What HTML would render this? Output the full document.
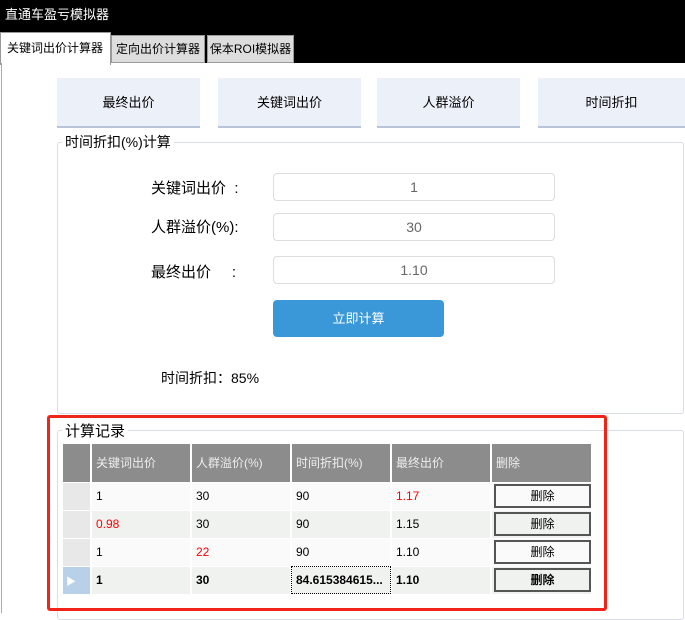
<!DOCTYPE html>
<html><head><meta charset="utf-8"><style>
*{margin:0;padding:0;box-sizing:border-box}
body{width:685px;height:613px;position:relative;overflow:hidden;background:#fff;font-family:"Liberation Sans","Noto Sans CJK SC",sans-serif;font-size:13px;color:#000}
.a{position:absolute}
.tb{background:#000;left:0;top:0;width:685px;height:63px}
.title{left:5px;top:4px;color:#fff;font-size:13px}
.tab{border:1px solid #999;background:#ddd;font-size:12px;text-align:center;line-height:26px}
.nb{background:#ecf0f8;border-bottom:2px solid #b8c4d8;height:50px;top:78px;text-align:center;line-height:50px;font-size:13px}
.fs{border:1px solid #d8dde6;border-radius:3px}
.lg{background:#fff;padding:0 3px;font-size:14px}
.lbl{font-size:15px}
.in{border:1px solid #ddd;border-radius:4px;left:273px;width:282px;height:28px;text-align:center;line-height:26px;color:#666;font-size:14px}
td{height:28px;padding-left:4px;font-size:12px;border-right:2px solid #fff;border-bottom:1px solid #fff}
th{height:38px;background:#8c8c8c;color:#eee;font-weight:normal;text-align:left;padding-left:4px;font-size:12px;border-right:2px solid #fff;border-bottom:1px solid #fff}
.rh{background:#e8e8e8;width:28px;padding:0}
.r{color:#f00}
.btn{border:2px solid #555;height:24px;width:97px;text-align:center;line-height:20px;margin-left:-2px}
</style></head><body>
<div class="a tb"></div>
<div class="a title">直通车盈亏模拟器</div>
<div class="a" style="left:0;top:32px;width:111px;height:33px;background:#fff;border:1px solid #999;border-bottom:none;font-size:12px;line-height:30px;padding-left:6px">关键词出价计算器</div>
<div class="a tab" style="left:111px;top:35px;width:94px;height:28px">定向出价计算器</div>
<div class="a tab" style="left:207px;top:35px;width:87px;height:28px">保本ROI模拟器</div>
<div class="a" style="left:1px;top:63px;width:1px;height:550px;background:#aaa"></div>
<div class="a nb" style="left:57px;width:143px">最终出价</div>
<div class="a nb" style="left:218px;width:143px">关键词出价</div>
<div class="a nb" style="left:377px;width:143px">人群溢价</div>
<div class="a nb" style="left:538px;width:147px">时间折扣</div>

<div class="a fs" style="left:57px;top:142px;width:627px;height:272px"></div>
<div class="a lg" style="left:62px;top:132px">时间折扣(%)计算</div>
<div class="a lbl" style="left:151px;top:177px">关键词出价&nbsp;&nbsp;:</div>
<div class="a lbl" style="left:151px;top:216px">人群溢价(%):</div>
<div class="a lbl" style="left:151px;top:261px">最终出价&nbsp;&nbsp;&nbsp;&nbsp;&nbsp;:</div>
<div class="a in" style="top:173px">1</div>
<div class="a in" style="top:213px">30</div>
<div class="a in" style="top:256px">1.10</div>
<div class="a" style="left:273px;top:300px;width:171px;height:37px;background:#3a98d8;border-radius:4px;color:#fff;text-align:center;line-height:37px;font-size:13px">立即计算</div>
<div class="a" style="left:161px;top:368px;font-size:14px">时间折扣：85%</div>

<div class="a fs" style="left:57px;top:430px;width:627px;height:190px"></div>
<div class="a lg" style="left:62px;top:420px;font-size:15px">计算记录</div>
<table class="a" style="left:63px;top:444px;border-collapse:collapse;width:530px">
<tr><th style="width:28px;padding:0"></th><th style="width:100px">关键词出价</th><th style="width:100px">人群溢价(%)</th><th style="width:100px">时间折扣(%)</th><th style="width:100px">最终出价</th><th>删除</th></tr>
<tr style="background:#fafafa"><td class="rh"></td><td>1</td><td>30</td><td>90</td><td class="r">1.17</td><td><div class="btn">删除</div></td></tr>
<tr style="background:#f0f2f0"><td class="rh"></td><td class="r">0.98</td><td>30</td><td>90</td><td>1.15</td><td><div class="btn">删除</div></td></tr>
<tr style="background:#fafafa"><td class="rh"></td><td>1</td><td class="r">22</td><td>90</td><td>1.10</td><td><div class="btn">删除</div></td></tr>
<tr style="background:#f0f2f0;font-weight:bold"><td class="rh" style="background:#b8d0e8;color:#fff;font-size:10px;padding-left:3px">▶</td><td><b>1</b></td><td><b>30</b></td><td style="outline:1px dotted #000;outline-offset:-1px"><b>84.615384615...</b></td><td><b>1.10</b></td><td><div class="btn">删除</div></td></tr>
</table>
<div class="a" style="left:47px;top:415px;width:560px;height:196px;border:3px solid #f02418;border-radius:3px"></div>
</body></html>
